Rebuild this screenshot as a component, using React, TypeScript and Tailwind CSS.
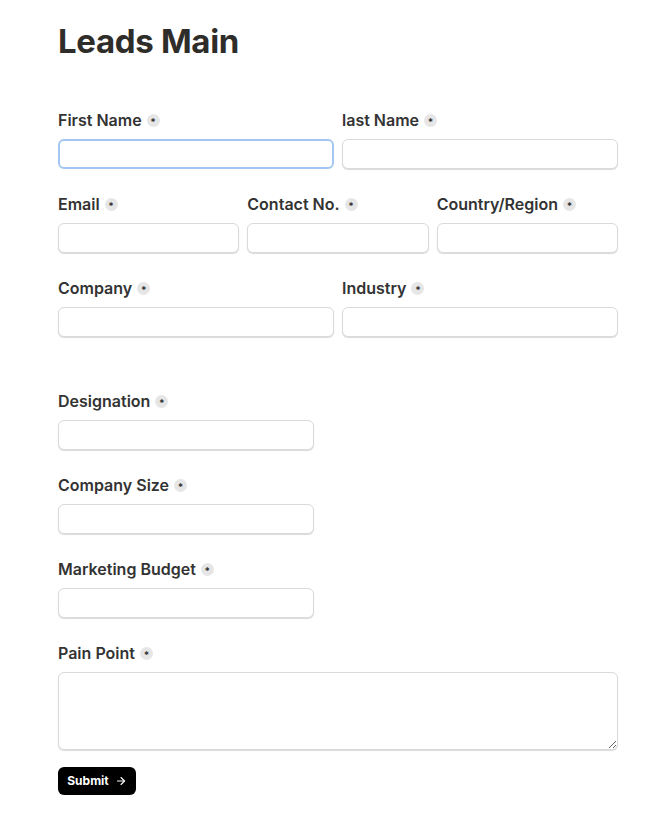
import React from 'react';

const Req: React.FC = () => (
    <span className="ml-[5px] inline-flex size-[13px] items-center justify-center rounded-full bg-[#e6e6e6] text-[10px] font-bold leading-none text-[#333] pt-[3px]">
        *
    </span>
);

interface FieldProps {
    label: string;
    focused?: boolean;
    className?: string;
}

const Label: React.FC<{ text: string }> = ({ text }) => (
    <label className="mb-[9px] flex h-5 items-center text-[16px] font-semibold leading-5 text-[#333]">
        {text}
        <Req />
    </label>
);

const Field: React.FC<FieldProps> = ({ label, focused, className }) => (
    <div className={`flex flex-col ${className ?? ''}`}>
        <Label text={label} />
        <input
            type="text"
            className={
                focused
                    ? 'h-[30px] w-full rounded-[6px] border-2 border-[#a3c6f2] bg-white px-2 outline-none'
                    : 'h-[30px] w-full rounded-[6px] border border-[#dadada] bg-white px-2 shadow-[0_1px_1px_rgba(0,0,0,0.15)] outline-none'
            }
        />
    </div>
);

const App: React.FC = () => {
    return (
        <div className="min-h-screen w-full bg-white font-['Inter',sans-serif] text-[#333]">
            <div className="w-[560px] ml-[58px] pt-[21px] pb-8">
                <h1 className="text-[33px] font-bold leading-[40px] tracking-[-0.01em] text-[#2f2d2a]">
                    Leads Main
                </h1>

                <div className="mt-[49px] flex flex-col gap-[25px]">
                    <div className="grid grid-cols-2 gap-2">
                        <Field label="First Name" focused />
                        <Field label="last Name" />
                    </div>
                    <div className="grid grid-cols-3 gap-2">
                        <Field label="Email" />
                        <Field label="Contact No." />
                        <Field label="Country/Region" />
                    </div>
                    <div className="grid grid-cols-2 gap-2">
                        <Field label="Company" />
                        <Field label="Industry" />
                    </div>
                </div>

                <div className="mt-[54px] flex flex-col gap-[25px]">
                    <Field label="Designation" className="w-[256px]" />
                    <Field label="Company Size" className="w-[256px]" />
                    <Field label="Marketing Budget" className="w-[256px]" />
                    <div className="flex flex-col">
                        <Label text="Pain Point" />
                        <textarea className="h-[78px] w-full rounded-[6px] border border-[#dadada] bg-white px-2 shadow-[0_1px_1px_rgba(0,0,0,0.15)] outline-none" />
                    </div>
                </div>

                <button className="mt-[17px] flex h-[28px] w-[78px] items-center justify-center gap-[6px] rounded-[6px] bg-black text-[12px] font-bold text-white">
                    Submit
                    <svg width="12" height="12" viewBox="0 0 24 24" fill="none" stroke="currentColor" strokeWidth="2.2" strokeLinecap="round" strokeLinejoin="round">
                        <path d="M5 12h14" />
                        <path d="M12 5l7 7-7 7" />
                    </svg>
                </button>
            </div>
        </div>
    );
};

export default App;
